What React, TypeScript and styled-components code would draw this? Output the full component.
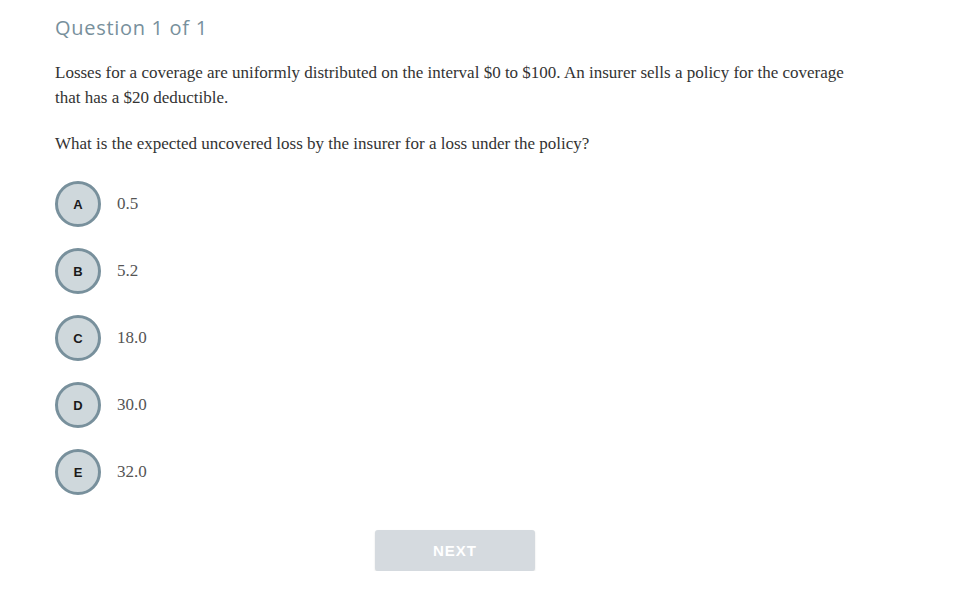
import React from "react";
import styled, { createGlobalStyle } from "styled-components";

const GlobalStyle = createGlobalStyle`
  html, body {
    margin: 0;
    padding: 0;
    background: #fff;
  }
`;

const Page = styled.div`
  width: 800px;
  padding: 16px 0 0 55px;
`;

const Heading = styled.h2`
  margin: 0 0 20px;
  font-family: "Open Sans", "DejaVu Sans", sans-serif;
  font-weight: 400;
  font-size: 20px;
  line-height: 24px;
  color: #78909c;
  letter-spacing: 0.7px;
`;

const Prompt = styled.p`
  margin: 0 0 21px;
  font-family: "Liberation Serif", "Times New Roman", serif;
  font-size: 17px;
  line-height: 25px;
  color: #333;
`;

const Options = styled.div`
  display: flex;
  flex-direction: column;
  gap: 21px;
  margin-top: 25px;
`;

const Option = styled.label`
  display: flex;
  align-items: center;
  gap: 16px;
  cursor: pointer;
`;

const Bubble = styled.span`
  box-sizing: border-box;
  width: 46px;
  height: 46px;
  border-radius: 50%;
  border: 3px solid #78909c;
  background: #cfd8dc;
  display: flex;
  align-items: center;
  justify-content: center;
  font-family: "Liberation Sans", Arial, sans-serif;
  font-weight: 700;
  font-size: 13px;
  color: #1a1a1a;
`;

const Answer = styled.span`
  font-family: "Liberation Serif", "Times New Roman", serif;
  font-size: 17px;
  color: #555;
`;

const Footer = styled.div`
  display: flex;
  justify-content: center;
  margin-top: 35px;
`;

const NextButton = styled.button`
  width: 160px;
  height: 41px;
  border: none;
  border-radius: 3px;
  background: #d5dadf;
  color: #fff;
  font-family: "Liberation Sans", Arial, sans-serif;
  font-weight: 700;
  font-size: 15px;
  letter-spacing: 1px;
  box-shadow: 0 1px 2px rgba(0, 0, 0, 0.12);
  cursor: not-allowed;
`;

const choices = [
  { key: "A", value: "0.5" },
  { key: "B", value: "5.2" },
  { key: "C", value: "18.0" },
  { key: "D", value: "30.0" },
  { key: "E", value: "32.0" },
];

export default function App() {
  return (
    <>
      <GlobalStyle />
      <Page>
        <Heading>Question 1 of 1</Heading>
        <Prompt>
          Losses for a coverage are uniformly distributed on the interval $0 to
          $100. An insurer sells a policy for the coverage that has a $20
          deductible.
        </Prompt>
        <Prompt>
          What is the expected uncovered loss by the insurer for a loss under
          the policy?
        </Prompt>
        <Options>
          {choices.map((c) => (
            <Option key={c.key}>
              <Bubble>{c.key}</Bubble>
              <Answer>{c.value}</Answer>
            </Option>
          ))}
        </Options>
        <Footer>
          <NextButton disabled>NEXT</NextButton>
        </Footer>
      </Page>
    </>
  );
}
